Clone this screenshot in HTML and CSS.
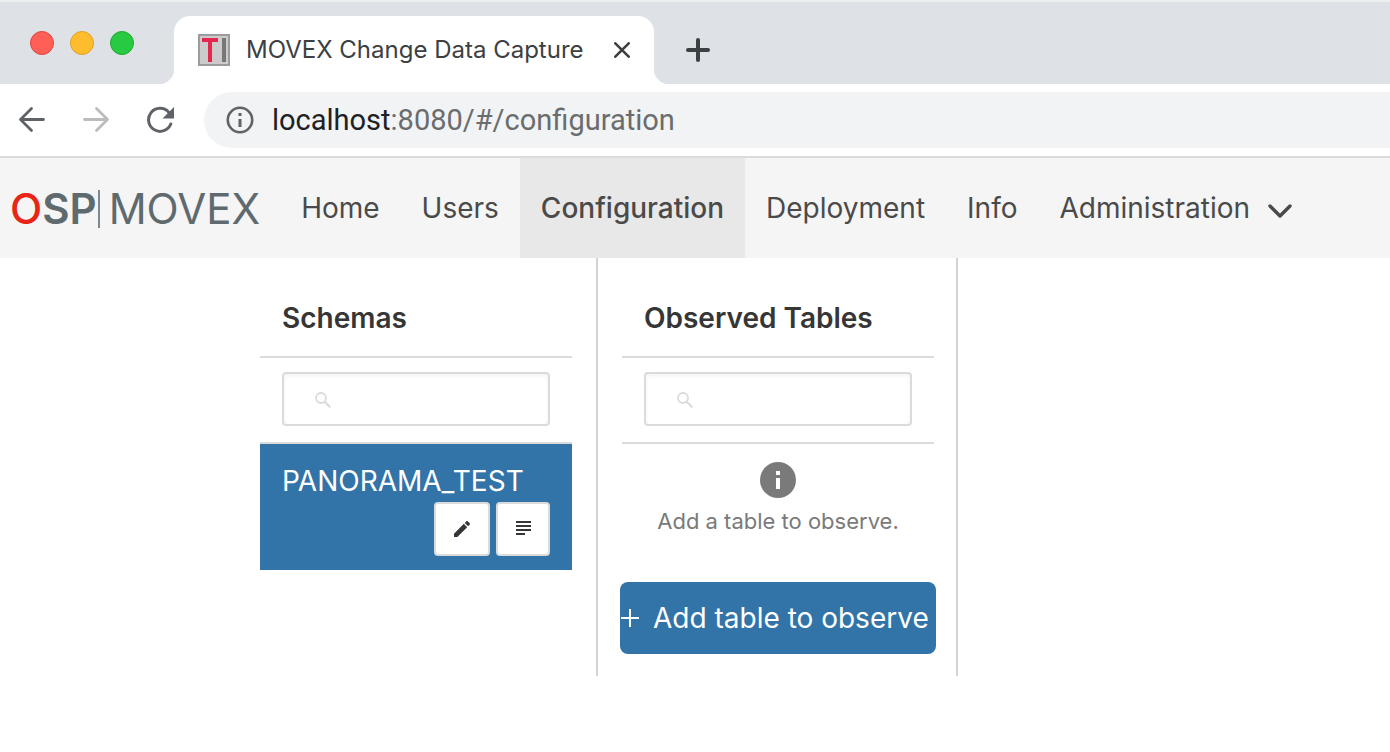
FILE: index.html
```html
<!DOCTYPE html>
<html lang="en">
<head>
<meta charset="utf-8">
<title>MOVEX Change Data Capture</title>
<link rel="stylesheet" href="styles.css">
</head>
<body>
<header class="browser">
  <div class="tab-strip">
    <div class="window-controls">
      <button class="light light-red" aria-label="Close window"></button>
      <button class="light light-yellow" aria-label="Minimize window"></button>
      <button class="light light-green" aria-label="Zoom window"></button>
    </div>
    <div class="tab">
      <svg class="favicon" viewBox="0 0 32 32" aria-hidden="true">
        <rect x="1" y="1" width="30" height="30" fill="#cccacb" stroke="#9c9c9c" stroke-width="2"/>
        <rect x="4" y="4" width="16" height="4" fill="#e4274d"/>
        <rect x="10" y="4" width="4" height="24" fill="#e4274d"/>
        <rect x="24" y="4" width="4" height="24" fill="#777"/>
      </svg>
      <span class="tab-title">MOVEX Change Data Capture</span>
      <button class="icon-button tab-close" aria-label="Close tab">
        <svg width="16" height="16" viewBox="0 0 16 16" fill="none" stroke="#3c4043" stroke-width="2.6" stroke-linecap="round"><path d="M1.300 1.300l13.400 13.400M14.700 1.300L1.300 14.700"/></svg>
      </button>
    </div>
    <button class="icon-button tab-new" aria-label="New tab">
      <svg width="24" height="24" viewBox="0 0 24 24" fill="none" stroke="#3c4043" stroke-width="4" stroke-linecap="round"><path d="M12 2v20M2 12h20"/></svg>
    </button>
  </div>
  <div class="toolbar">
    <button class="icon-button" aria-label="Back">
      <svg width="28" height="28" viewBox="0 0 28 28" fill="none" stroke="#5f6368" stroke-width="2.800" stroke-linecap="round" stroke-linejoin="round"><path d="M25.500 13.500H3M13.500 2.500L2.500 13.500l11 11"/></svg>
    </button>
    <button class="icon-button" aria-label="Forward" disabled>
      <svg width="28" height="28" viewBox="0 0 28 28" fill="none" stroke="#babcbe" stroke-width="2.800" stroke-linecap="round" stroke-linejoin="round"><path d="M2.500 13.500h23M14.500 2.500l11 11-11 11"/></svg>
    </button>
    <button class="icon-button" aria-label="Reload">
      <svg width="28" height="28" viewBox="0 0 28 28" fill="none"><path d="M24.800 18A11.500 11.500 0 1 1 22.500 6" stroke="#5f6368" stroke-width="3" stroke-linecap="round"/><path d="M28 1v11.500H16.500z" fill="#5f6368"/></svg>
    </button>
    <div class="address">
      <svg width="28" height="28" viewBox="0 0 28 28" fill="none" aria-hidden="true"><circle cx="14" cy="14" r="12.200" stroke="#5f6368" stroke-width="2.600"/><path d="M14 13v8M14 7v3" stroke="#5f6368" stroke-width="3"/></svg>
      <span class="url"><span class="url-host">localhost</span>:8080/#/configuration</span>
    </div>
  </div>
</header>
<nav class="navbar">
  <a class="brand" href="#/"><span class="brand-name"><span class="brand-o">O</span>SP</span><span class="brand-bar"></span><span class="brand-product">MOVEX</span></a>
  <a class="nav-link" href="#/">Home</a>
  <a class="nav-link" href="#/users">Users</a>
  <a class="nav-link nav-link-active" href="#/configuration">Configuration</a>
  <a class="nav-link" href="#/deployment">Deployment</a>
  <a class="nav-link" href="#/info">Info</a>
  <button class="nav-link nav-menu" aria-haspopup="true">Administration
    <svg class="nav-arrow" width="24" height="16" viewBox="0 0 24 16" fill="none" stroke="#4a4a4a" stroke-width="3.400" stroke-linecap="round" stroke-linejoin="round" aria-hidden="true"><path d="M2 3l10 10L22 3"/></svg>
  </button>
</nav>
<main class="columns">
  <section class="column">
    <h2 class="column-title">Schemas</h2>
    <label class="search">
      <svg class="search-icon" viewBox="0 0 16 16" fill="none" stroke="#dbdbdb" stroke-width="1.800" aria-hidden="true"><circle cx="6" cy="6" r="5"/><path d="M9.700 9.700L15.300 15.300" stroke-width="2.200"/></svg>
      <input class="search-input" type="search" aria-label="Search schemas">
    </label>
    <div class="schema">
      <span class="schema-name">PANORAMA_TEST</span>
      <div class="schema-actions">
        <button class="action action-edit" aria-label="Edit schema">
          <svg width="16" height="16" viewBox="3 3 18 18" fill="#363636"><path d="M20.710 7.040c.39-.39.39-1.040 0-1.410l-2.340-2.340c-.37-.39-1.020-.39-1.410 0l-1.840 1.830 3.750 3.750M3 17.250V21h3.750L17.810 9.930l-3.750-3.750z"/></svg>
        </button>
        <button class="action" aria-label="Schema log">
          <svg width="16" height="16" viewBox="0 0 16 16" fill="#363636"><path d="M1 0h15v2H1zM1 4h15v2H1zM1 8h15v2H1zM1 12h9v2H1z"/></svg>
        </button>
      </div>
    </div>
  </section>
  <section class="column column-tables">
    <h2 class="column-title">Observed Tables</h2>
    <label class="search">
      <svg class="search-icon" viewBox="0 0 16 16" fill="none" stroke="#dbdbdb" stroke-width="1.800" aria-hidden="true"><circle cx="6" cy="6" r="5"/><path d="M9.700 9.700L15.300 15.300" stroke-width="2.200"/></svg>
      <input class="search-input" type="search" aria-label="Search observed tables">
    </label>
    <div class="empty">
      <svg width="36" height="36" viewBox="0 0 36 36" aria-hidden="true"><circle cx="18" cy="18" r="18" fill="#7a7a7a"/><path d="M16 9h4v4h-4zM16 16h4v11h-4z" fill="#fff"/></svg>
      <p class="empty-text">Add a table to observe.</p>
    </div>
    <button class="add-button">
      <svg width="18" height="18" viewBox="0 0 18 18" fill="none" stroke="#fff" stroke-width="2" aria-hidden="true"><path d="M9 0v18M0 9h18"/></svg>
      Add table to observe
    </button>
  </section>
</main>
</body>
</html>
```
FILE: styles.css
```css
* {
  box-sizing: border-box;
}

body {
  margin: 0;
  background: #fff;
  color: #4a4a4a;
  font-family: Inter, "Liberation Sans", sans-serif;
  font-size: 28px;
  line-height: 42px;
}

button {
  padding: 0;
  border: 0;
  background: none;
  color: inherit;
  font: inherit;
}

svg {
  display: block;
  flex: none;
}

.browser {
  border-bottom: 2px solid #dbdbdb;
}

.tab-strip {
  display: flex;
  align-items: stretch;
  height: 84px;
  padding-top: 16px;
  background: #dee1e6;
  box-shadow: inset 0 2px #eceef0;
}

.window-controls {
  display: flex;
  gap: 16px;
  padding: 15px 40px 0 30px;
}

.light {
  width: 24px;
  height: 24px;
  border: 1px solid #e0443e;
  border-radius: 50%;
  background: #ff5f57;
}

.light-yellow {
  border-color: #dea123;
  background: #ffbd2e;
}

.light-green {
  border-color: #1aab29;
  background: #28ca42;
}

.tab {
  position: relative;
  display: flex;
  align-items: center;
  width: 480px;
  padding: 0 24px;
  border-radius: 16px 16px 0 0;
  background: #fff;
}

.tab::before,
.tab::after {
  position: absolute;
  bottom: 0;
  width: 16px;
  height: 16px;
  content: "";
}

.tab::before {
  right: 100%;
  background: radial-gradient(circle at 0 0, #dee1e6 16px, #fff 17px);
}

.tab::after {
  left: 100%;
  background: radial-gradient(circle at 100% 0, #dee1e6 16px, #fff 17px);
}

.favicon {
  width: 32px;
  height: 32px;
}

.tab-title {
  flex: 1;
  margin-left: 16px;
  color: #3c4043;
  font-size: 24px;
  white-space: nowrap;
}

.icon-button {
  display: flex;
  align-items: center;
}

.tab-new {
  margin-left: 32px;
}

.toolbar {
  display: flex;
  align-items: center;
  gap: 36px;
  height: 72px;
  padding-left: 18px;
}

.address {
  display: flex;
  flex: 1;
  align-items: center;
  gap: 18px;
  height: 56px;
  margin-left: -6px;
  padding-left: 22px;
  border-radius: 28px 0 0 28px;
  background: #f1f3f4;
}

.url {
  color: #6a6c6e;
  font-family: Roboto, sans-serif;
  font-size: 29px;
}

.url-host {
  color: #202124;
}

.navbar {
  display: flex;
  min-height: 100px;
  background: #f5f5f5;
}

.brand {
  display: flex;
  align-items: center;
  padding: 2px 20px 0 10px;
  color: #5f6a6f;
  font-size: 42px;
  text-decoration: none;
}

.brand-name {
  font-weight: 600;
}

.brand-o {
  color: #e82516;
  font-weight: 500;
}

.brand-bar {
  width: 2px;
  height: 38px;
  margin: 0 9px 0 1px;
  background: #7e888e;
}

.brand-product {
  font-weight: 400;
}

.nav-link {
  display: flex;
  align-items: center;
  padding: 0 21px;
  color: #4a4a4a;
  text-decoration: none;
}

.nav-link-active {
  background: #e8e8e8;
  font-weight: 500;
}

.nav-menu {
  gap: 18px;
}

.nav-arrow {
  margin-top: 6px;
}

.columns {
  display: flex;
  padding-left: 236px;
}

.column {
  flex: 0 1 362px;
  min-height: 418px;
  padding: 39px 24px 22px;
  border-right: 2px solid #d3d3d3;
}

.column-tables {
  flex-basis: 360px;
  padding-right: 22px;
}

.column-title {
  margin: 0;
  padding: 0 22px 17px;
  border-bottom: 2px solid #dbdbdb;
  color: #363636;
  font-size: 28px;
  font-weight: 600;
}

.search {
  position: relative;
  display: block;
  padding: 14px 22px 16px;
  border-bottom: 2px solid #dbdbdb;
}

.search-icon {
  position: absolute;
  top: 34px;
  left: 55px;
  width: 16px;
  height: 16px;
}

.search-input {
  display: block;
  width: 100%;
  height: 54px;
  padding: 0 16px 0 60px;
  border: 2px solid #dbdbdb;
  border-radius: 4px;
  background: #fff;
  box-shadow: inset 0 2px 4px rgba(10, 10, 10, 0.05);
  font: inherit;
}

.schema {
  padding: 16px 22px 14px;
  background: #3273a8;
  color: #fff;
}

.schema-actions {
  display: flex;
  justify-content: flex-end;
  gap: 6px;
}

.action {
  display: flex;
  align-items: center;
  justify-content: center;
  width: 54px;
  height: 54px;
  border: 2px solid #dbdbdb;
  border-radius: 4px;
  background: #fff;
}

.action-edit {
  width: 56px;
}

.empty {
  display: flex;
  flex-direction: column;
  align-items: center;
  padding: 18px 0 40px;
  color: #7a7a7a;
}

.empty-text {
  margin: 2px 0 0;
  font-size: 22px;
}

.add-button {
  display: flex;
  align-items: center;
  gap: 14px;
  width: calc(100% + 4px);
  height: 72px;
  margin: 0 -2px;
  padding-left: 1px;
  border-radius: 8px;
  background: #3273a8;
  color: #fff;
  white-space: nowrap;
}
```
